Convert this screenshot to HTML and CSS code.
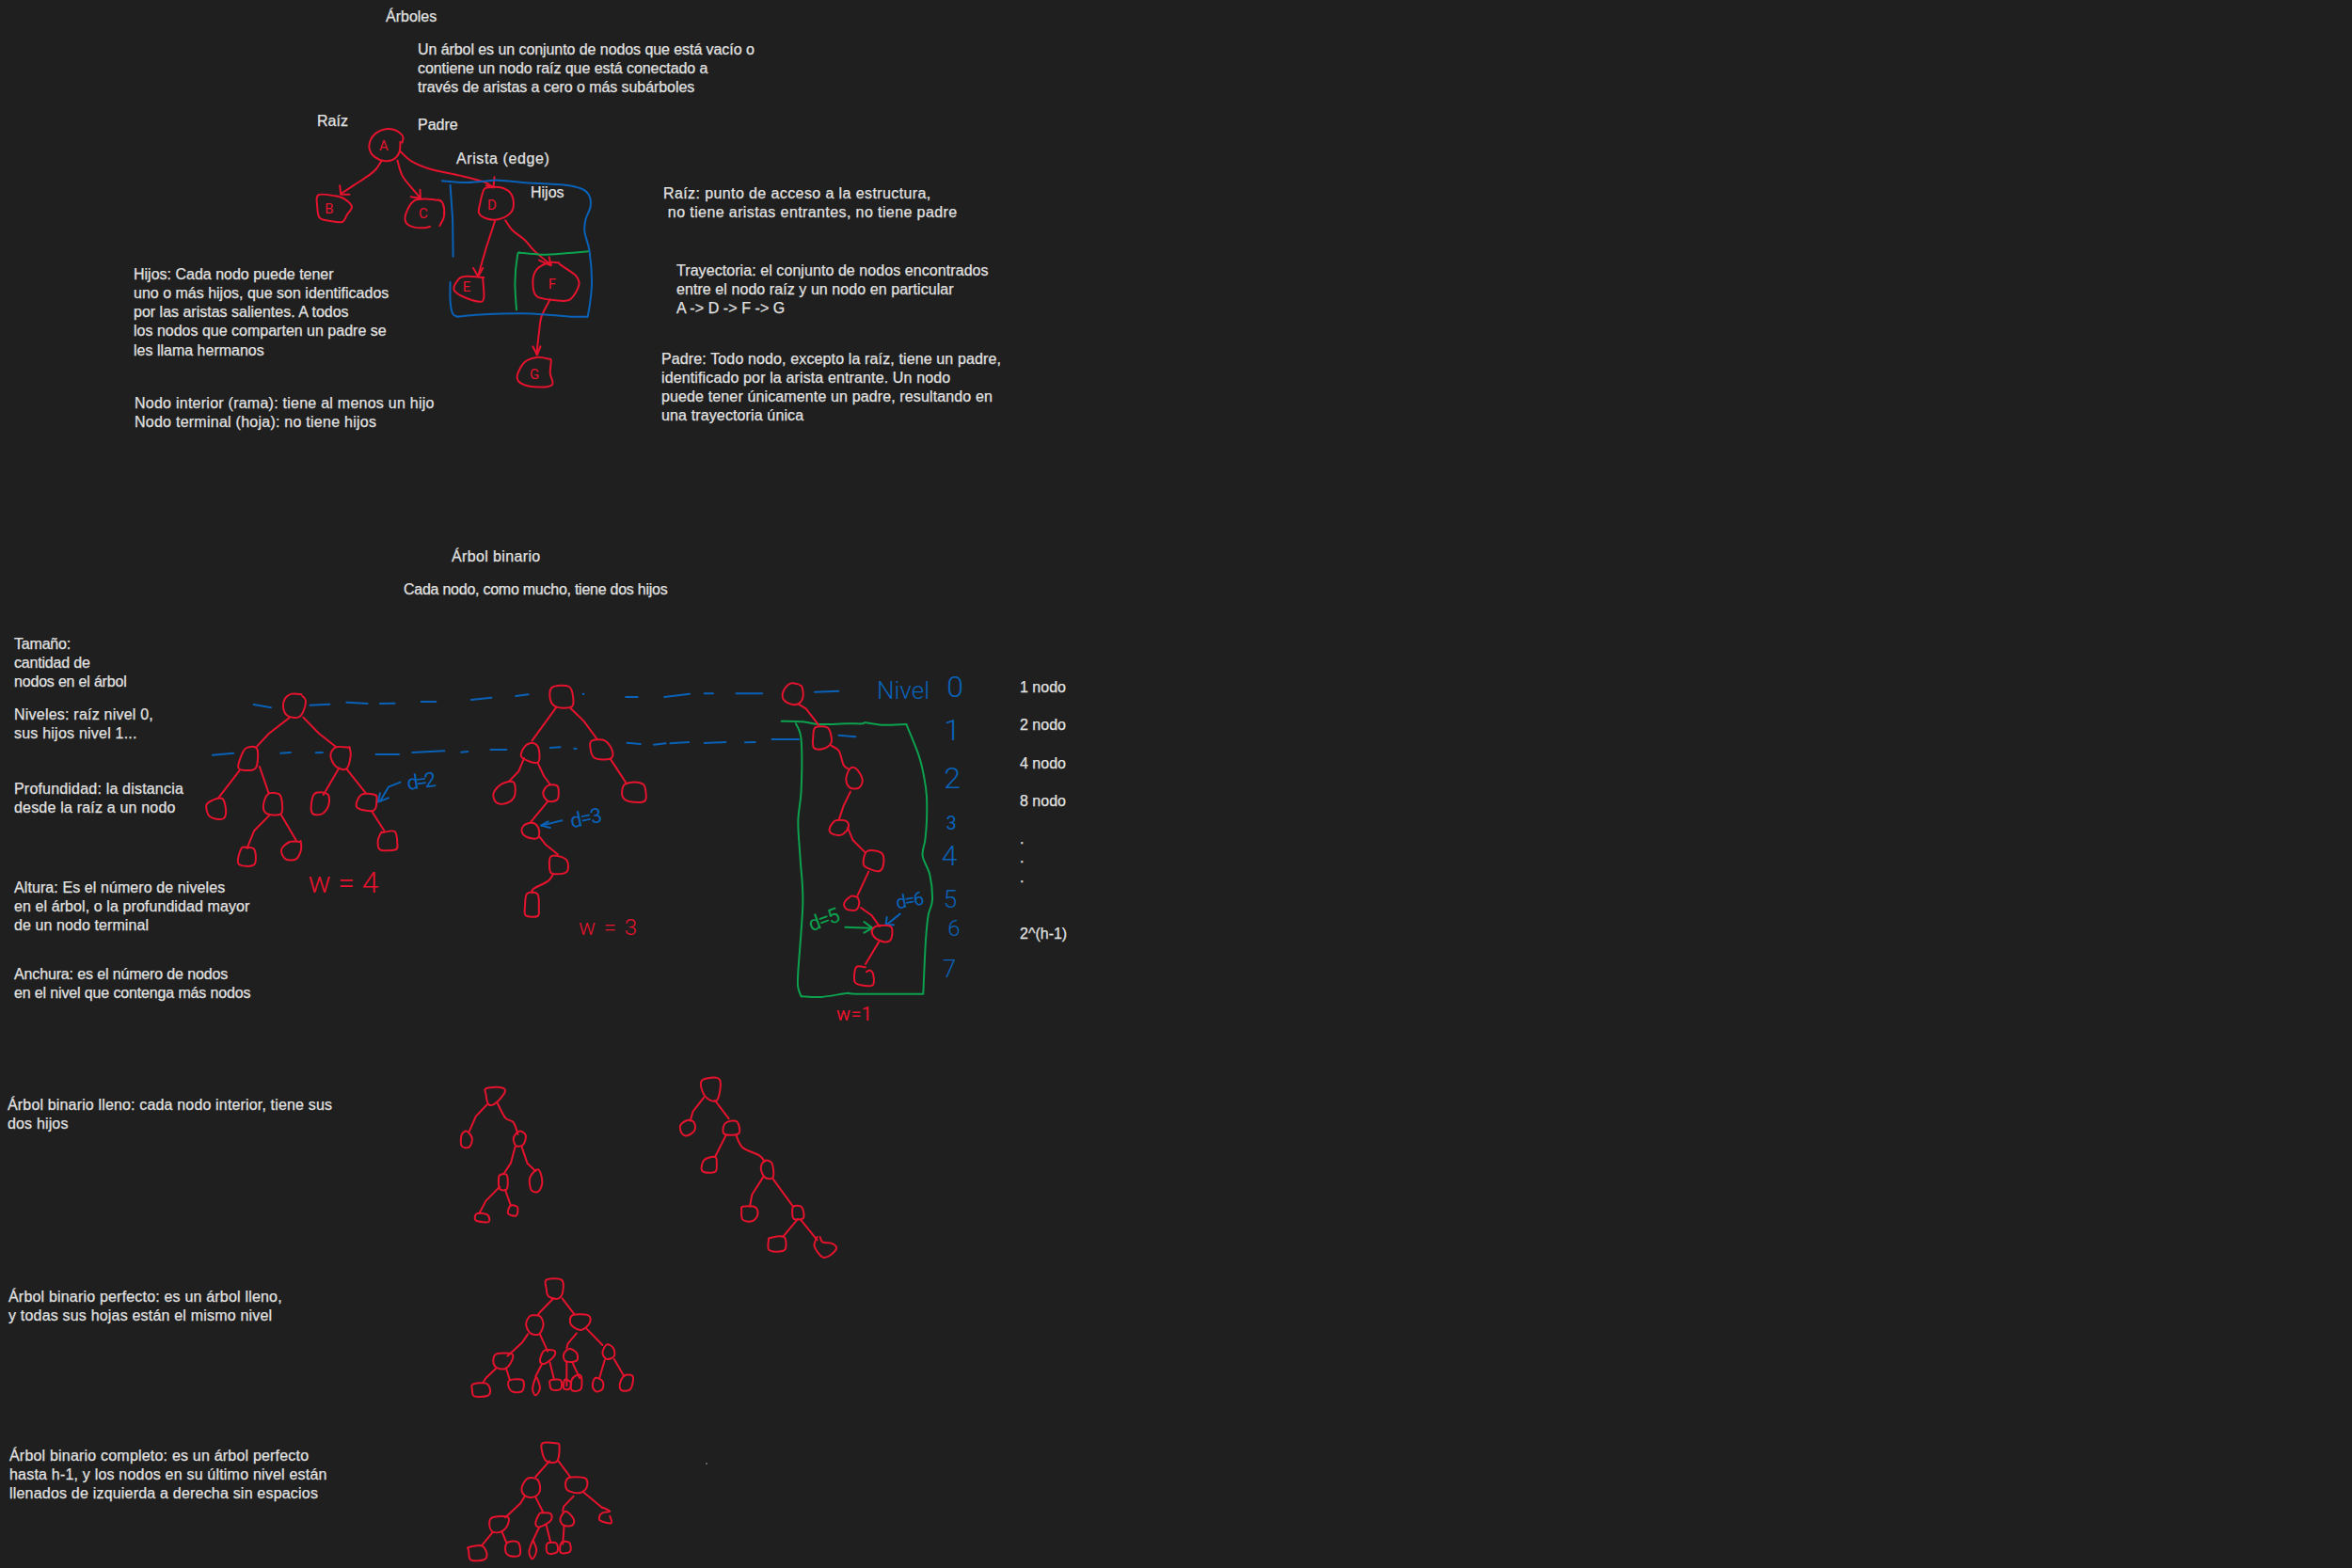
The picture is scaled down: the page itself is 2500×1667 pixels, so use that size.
FILE: index.html
```html
<!DOCTYPE html>
<html lang="es">
<head>
<meta charset="utf-8">
<title>Árboles</title>
<link rel="stylesheet" href="styles.css">
</head>
<body>
<main class="board">
<svg class="ink" width="2500" height="1667" viewBox="0 0 2500 1667">
<!-- section 1: general tree -->
<g transform="translate(300,0) scale(.5102,.3333)">
<g class="red">
<polyline points="250,455 252,440 248,428 235,415 215,412 195,425 183,450 182,478 192,500 212,513 232,508 244,485 246,452"/>
<polyline points="207,513 195,540 180,560 150,590 122,618"/><polyline points="120,592 122,620 140,620"/>
<polygon points="75,622 110,625 130,635 145,660 135,685 125,708 100,705 78,695 73,660"/>
<polyline points="240,512 250,560 270,600 288,632"/><polyline points="287,605 288,632 268,628"/>
<polyline points="330,640 305,635 275,640 258,680 258,710 275,725 295,727 308,723"/><polyline points="328,720 337,690 335,650 325,637"/>
<polyline points="246,483 270,515 310,540 370,560 420,580 440,598"/><polyline points="442,565 440,598 425,592"/>
<polygon points="420,605 412,650 410,680 425,697 450,700 475,680 482,650 475,615 455,598 430,598"/>
<polyline points="443,705 425,790 408,880"/><polyline points="398,855 408,882 418,855"/>
<polyline points="420,885 380,882 365,895 358,925 375,945 410,962 420,950 418,890"/>
<polyline points="465,703 480,735 505,765 525,800 560,845"/><polyline points="535,830 560,847 556,820"/>
<polygon points="575,838 555,838 530,860 522,900 530,945 570,958 600,955 618,910 612,880 580,845"/>
<polyline points="558,955 540,1010 535,1060 530,1130"/><polyline points="522,1105 531,1132 538,1105"/>
<polygon points="555,1145 530,1140 505,1155 490,1195 495,1220 525,1234 562,1228 558,1190 560,1150"/>
</g>
<g class="blue">
<polyline points="333,577 380,582 420,578 450,575 500,582 590,590 625,603 640,625 642,660 632,700 630,740 640,800 645,900 640,980 636,1010"/>
<polyline points="636,1010 600,1010 560,1005 500,1000 420,1003 365,1010"/>
<polyline points="365,1010 355,1000 350,960 350,900"/>
<polyline points="350,590 355,700 356,818"/>
</g>
<g class="green"><polyline points="637,802 590,808 540,812 495,806"/><polyline points="495,806 490,815 485,900 488,988"/></g>
</g>
<!-- section 2, first tree -->
<g transform="translate(0,660) scale(.4464,.3333)">
<g class="blue">
<polyline points="604,267 645,277"/><polyline points="738,269 785,266"/><polyline points="825,260 875,264"/><polyline points="905,264 940,263"/><polyline points="1003,258 1038,258"/>
<polyline points="506,428 556,422"/><polyline points="668,422 692,420"/><polyline points="752,421 768,420"/><polyline points="895,426 950,426"/><polyline points="982,420 1058,415"/><polyline points="1098,419 1114,417"/>
<polyline points="953,515 925,530 905,575"/><polyline points="905,550 900,578 925,565"/>
</g>
<g class="red">
<polyline points="718,235 695,233 678,250 675,280 685,303 710,308 722,290 728,255 720,240"/>
<polyline points="690,308 640,360 612,400"/><polyline points="722,308 760,360 800,402"/>
<polygon points="612,408 590,404 578,420 568,470 600,476 612,460"/>
<polyline points="832,405 800,403 787,430 800,465 825,472 835,430 832,402"/>
<polyline points="570,478 520,565"/><polyline points="618,465 640,550"/>
<polygon points="530,568 505,573 491,590 500,625 530,632 538,610"/>
<polygon points="665,553 638,553 627,590 635,615 668,617 672,585"/>
<polyline points="642,620 605,670 590,720"/><polyline points="670,620 705,700"/>
<polyline points="590,725 575,725 568,775 605,778 606,730 585,722"/>
<polyline points="715,705 690,705 670,730 680,760 705,760 717,730 716,702"/>
<polyline points="807,470 770,555"/><polyline points="825,472 870,548"/>
<polygon points="780,553 748,553 742,610 765,617 782,590"/>
<polygon points="893,555 860,555 850,595 890,605 897,570"/>
<polyline points="885,607 915,670"/>
<polygon points="912,675 940,672 946,710 942,730 905,730 900,700 908,675"/>
</g>
</g>
<!-- section 2, second tree and level lines -->
<g transform="translate(500,700) scale(.4464,.3333)">
<g class="blue">
<polyline points="2,132 50,125"/><polyline points="108,120 138,115"/><polyline points="268,113 270,114"/><polyline points="370,123 398,123"/><polyline points="462,123 522,113"/><polyline points="557,112 578,112"/><polyline points="633,112 695,112"/><polyline points="820,107 877,104"/>
<polyline points="48,291 86,291"/><polyline points="190,285 214,283"/><polyline points="247,287 252,288"/><polyline points="373,269 405,273"/><polyline points="437,275 465,271"/><polyline points="476,271 520,267"/><polyline points="557,270 608,267"/><polyline points="654,268 678,267"/><polyline points="718,258 782,258"/><polyline points="877,245 917,250"/>
<polyline points="218,517 170,533"/><polyline points="185,520 168,533 190,540"/>
</g>
<g class="red">
<polygon points="195,92 235,90 245,130 240,155 205,155 190,130"/>
<polyline points="205,155 147,262"/><polyline points="238,158 270,200 302,258"/>
<polygon points="150,270 130,280 122,315 160,332 163,290"/>
<polygon points="290,262 320,262 338,295 333,320 295,317 285,280"/>
<polyline points="128,318 115,360 92,392"/><polyline points="160,332 175,375 190,402"/>
<polygon points="103,395 75,400 55,430 62,460 85,462 105,440"/>
<polygon points="205,405 185,405 173,430 185,455 207,450 210,420"/>
<polyline points="333,320 355,365 372,400"/>
<polygon points="385,395 365,405 362,440 380,457 415,455 417,420 410,400"/>
<polyline points="185,455 142,525"/>
<polygon points="150,525 130,530 122,550 135,570 160,573 163,545"/>
<polyline points="165,570 180,595 208,625"/>
<polygon points="208,630 190,635 190,680 205,688 230,680 230,645"/>
<polyline points="197,688 185,710 150,735 147,748"/>
<polygon points="135,750 160,752 163,800 160,822 132,820 130,790"/>
</g>
</g>
<!-- section 2, third tree -->
<g transform="translate(820,700) scale(.3333)">
<g class="green">
<polyline points="32,200 100,202 150,210 240,208 290,208 300,205 350,212 430,210"/>
<polyline points="430,210 470,310 487,380 495,440 495,520 490,580 482,630 505,690 513,770 500,820 492,900 484,1068"/>
<polyline points="484,1070 270,1070 240,1068 160,1080 95,1078"/>
<polyline points="95,1078 85,1050 85,1000 100,780 92,640 85,520 95,420 95,260 78,208"/>
<polyline points="235,857 320,860"/><polyline points="295,840 322,860 295,875"/>
</g>
<g class="blue"><polyline points="410,815 367,850"/><polyline points="368,825 365,850 390,850"/></g>
<g class="red">
<polyline points="85,82 60,80 38,105 38,130 60,145 85,145 100,125 98,92 90,85"/>
<polyline points="85,145 110,160 150,212"/>
<polygon points="140,220 178,220 190,245 190,270 165,288 135,285 133,250"/>
<polyline points="190,278 215,295 230,340 245,352"/>
<polygon points="250,352 270,352 290,385 280,412 250,412 238,385"/>
<polyline points="252,425 230,470 215,515"/>
<polygon points="215,515 240,520 245,540 225,562 195,560 185,545 200,520"/>
<polyline points="243,540 260,580 300,620"/>
<polygon points="305,615 350,620 358,650 345,678 310,670 293,655"/>
<polyline points="310,680 275,755"/>
<polyline points="275,762 255,758 232,780 240,800 270,802 280,780 275,762"/>
<polyline points="285,795 320,820 345,855"/>
<polygon points="345,852 380,855 385,880 375,902 345,900 322,880 325,860"/>
<polyline points="342,905 300,975"/>
<polyline points="300,985 270,985 265,1030 285,1042 323,1042 325,1010 315,995 303,1000"/>
</g>
</g>
<!-- full binary trees -->
<g class="red" transform="translate(0,1130) scale(.5869,.3333)">
<polygon points="880,82 905,78 915,90 900,125 885,133 880,100"/>
<polyline points="882,133 862,170 850,218"/><polyline points="900,125 915,175 930,190 938,228"/>
<polygon points="845,218 836,230 836,265 850,268 855,240"/>
<polygon points="940,218 930,240 935,265 948,260 952,230"/>
<polyline points="933,268 925,320 912,355"/><polyline points="945,268 955,320 970,345"/>
<polygon points="905,358 918,358 918,402 905,402 903,375"/>
<polygon points="975,340 960,365 962,405 975,410 982,380"/>
<polyline points="905,395 880,440 868,480"/><polyline points="915,405 925,455"/>
<polygon points="865,480 860,495 865,505 885,507 883,485"/>
<polygon points="925,455 920,480 935,487 937,460"/>
<polygon points="1272,55 1303,52 1300,115 1285,118 1272,90"/>
<polyline points="1275,110 1255,155 1250,185"/><polyline points="1295,120 1320,178"/>
<polygon points="1245,183 1232,200 1235,225 1245,232 1258,215 1257,190"/>
<polygon points="1318,188 1335,188 1338,225 1313,228 1310,205"/>
<polyline points="1315,230 1295,300"/><polyline points="1333,230 1345,270 1375,295 1385,315"/>
<polygon points="1295,300 1275,310 1272,345 1295,348 1298,320"/>
<polygon points="1385,312 1378,335 1385,365 1400,365 1398,320"/>
<polyline points="1382,365 1362,420 1358,458"/><polyline points="1400,370 1435,455"/>
<polygon points="1345,458 1368,460 1372,485 1362,505 1345,500 1343,470"/>
<polygon points="1437,458 1452,460 1455,495 1438,498 1435,480"/>
<polyline points="1445,498 1418,555"/><polyline points="1450,500 1480,565"/>
<polygon points="1395,558 1420,555 1422,595 1405,602 1392,595 1392,565"/>
<polyline points="1480,555 1475,585 1490,620 1505,612 1515,590 1505,575 1490,572 1485,555"/>
</g>
<!-- perfect and complete binary trees -->
<g class="red" transform="translate(0,1340) scale(.4591,.3333)">
<polygon points="1265,62 1300,62 1303,100 1292,122 1270,115 1265,90"/>
<polyline points="1282,120 1250,165 1245,175"/><polyline points="1302,122 1330,172"/>
<polygon points="1235,175 1250,178 1258,205 1248,235 1228,232 1218,205 1225,180"/>
<polygon points="1325,175 1362,175 1365,200 1345,222 1322,205"/>
<polyline points="1222,235 1210,260 1175,305"/><polyline points="1250,235 1268,290"/>
<polyline points="1335,232 1315,265 1312,280"/><polyline points="1358,218 1395,270"/>
<polygon points="1150,298 1185,298 1185,320 1170,345 1150,342 1142,320"/>
<polygon points="1270,285 1285,290 1280,310 1260,330 1250,320 1258,290"/>
<polygon points="1318,282 1335,295 1335,320 1310,322 1305,300"/>
<polygon points="1405,268 1420,280 1422,305 1405,315 1395,295"/>
<polyline points="1148,345 1125,375 1118,390"/><polyline points="1172,345 1180,380"/>
<polygon points="1095,395 1125,392 1135,415 1128,432 1098,433 1093,410"/>
<polygon points="1180,382 1210,382 1210,415 1190,420 1178,405"/>
<polyline points="1255,330 1240,370"/><polyline points="1273,325 1283,380"/>
<polygon points="1240,375 1233,410 1240,430 1250,410 1245,380"/>
<polygon points="1275,382 1298,382 1298,410 1278,412 1273,395"/>
<polyline points="1312,322 1312,400"/><polyline points="1325,325 1342,375"/>
<polygon points="1308,380 1305,408 1318,410 1322,390"/>
<polygon points="1330,370 1345,368 1345,410 1325,415 1322,390"/>
<polyline points="1400,318 1388,375"/><polyline points="1422,315 1445,370"/>
<polygon points="1378,375 1395,385 1395,410 1380,418 1372,400"/>
<polygon points="1445,368 1465,370 1460,410 1440,415 1435,395"/>

<polygon points="1256,583 1286,583 1295,590 1290,640 1265,640 1255,610"/>
<polyline points="1272,640 1240,690"/><polyline points="1293,640 1320,690"/>
<polygon points="1222,695 1245,700 1250,735 1235,755 1215,750 1208,725"/>
<polygon points="1315,695 1355,695 1358,725 1340,742 1312,730"/>
<polyline points="1215,752 1205,775 1170,820"/><polyline points="1240,755 1258,805"/>
<polyline points="1328,752 1305,785 1303,800"/><polyline points="1350,738 1395,790"/>
<polygon points="1140,820 1175,818 1175,845 1160,865 1140,865 1133,840"/>
<polygon points="1255,805 1275,808 1275,830 1250,850 1240,840 1248,810"/>
<polygon points="1310,800 1328,825 1325,845 1305,845 1297,825"/>
<polyline points="1395,788 1412,800 1395,805 1388,815 1390,830 1415,838 1412,815"/>
<polyline points="1140,868 1115,910"/><polyline points="1162,865 1172,898"/>
<polygon points="1085,915 1115,910 1127,935 1120,955 1090,955 1085,925"/>
<polygon points="1175,900 1200,900 1203,940 1180,942 1170,925"/>
<polyline points="1248,852 1235,890"/><polyline points="1265,845 1275,900"/>
<polygon points="1233,895 1225,930 1233,952 1242,925 1235,895"/>
<polygon points="1268,902 1288,902 1290,930 1270,935 1265,920"/>
<polyline points="1306,848 1303,905"/>
<polygon points="1300,900 1318,900 1320,928 1298,932"/>
</g>
<!-- drawn labels -->
<g class="lab lab-red s14">
<text x="408" y="160">A</text><text x="350" y="227">B</text><text x="450" y="232">C</text><text x="523" y="223">D</text><text x="496" y="310">E</text><text x="587" y="307">F</text><text x="568" y="403">G</text>
</g>
<g class="lab lab-red">
<text class="s32" x="365" y="949" textLength="75">w = 4</text>
<text class="s24" x="646" y="994" textLength="62">w = 3</text>
<text class="s20" x="908" y="1085" textLength="38">w=1</text>
</g>
<g class="lab lab-blue">
<text class="s22" x="448" y="838" textLength="31" transform="rotate(-8 448 832)">d=2</text>
<text class="s22" x="623" y="877" textLength="34" transform="rotate(-12 623 870)">d=3</text>
<text class="s20" x="967" y="964" textLength="30" transform="rotate(-10 967 957)">d=6</text>
<text class="s26" x="960" y="743">Nivel</text>
<text class="s32" x="1015" y="741">0</text>
<text class="s32" x="1012" y="787">1</text>
<text class="s32" x="1012" y="838">2</text>
<text class="s20" x="1011" y="882">3</text>
<text class="s30" x="1009" y="920">4</text>
<text class="s26" x="1010" y="965">5</text>
<text class="s24" x="1014" y="995">6</text>
<text class="s26" x="1009" y="1039">7</text>
</g>
<g class="lab lab-green"><text class="s22" x="876" y="985" textLength="34" transform="rotate(-20 876 978)">d=5</text></g>
<circle class="speck" cx="751" cy="1556" r="1"/>
</svg>

<p class="note t1">Árboles</p>
<p class="note t2">Un árbol es un conjunto de nodos que está vacío o
contiene un nodo raíz que está conectado a
través de aristas a cero o más subárboles</p>
<p class="note t3">Raíz</p>
<p class="note t4">Padre</p>
<p class="note t5">Arista (edge)</p>
<p class="note t6">Hijos</p>
<p class="note t7">Raíz: punto de acceso a la estructura,
 no tiene aristas entrantes, no tiene padre</p>
<p class="note t8">Trayectoria: el conjunto de nodos encontrados
entre el nodo raíz y un nodo en particular
A -&gt; D -&gt; F -&gt; G</p>
<p class="note t9">Padre: Todo nodo, excepto la raíz, tiene un padre,
identificado por la arista entrante. Un nodo
puede tener únicamente un padre, resultando en
una trayectoria única</p>
<p class="note t10">Hijos: Cada nodo puede tener
uno o más hijos, que son identificados
por las aristas salientes. A todos
los nodos que comparten un padre se
les llama hermanos</p>
<p class="note t11">Nodo interior (rama): tiene al menos un hijo
Nodo terminal (hoja): no tiene hijos</p>
<p class="note t12">Árbol binario</p>
<p class="note t13">Cada nodo, como mucho, tiene dos hijos</p>
<p class="note t14">Tamaño:
cantidad de
nodos en el árbol</p>
<p class="note t15">Niveles: raíz nivel 0,
sus hijos nivel 1...</p>
<p class="note t16">Profundidad: la distancia
desde la raíz a un nodo</p>
<p class="note t17">Altura: Es el número de niveles
en el árbol, o la profundidad mayor
de un nodo terminal</p>
<p class="note t18">Anchura: es el número de nodos
en el nivel que contenga más nodos</p>
<p class="note t19">1 nodo

2 nodo

4 nodo

8 nodo

.
.
.


2^(h-1)</p>
<p class="note t20">Árbol binario lleno: cada nodo interior, tiene sus
dos hijos</p>
<p class="note t21">Árbol binario perfecto: es un árbol lleno,
y todas sus hojas están el mismo nivel</p>
<p class="note t22">Árbol binario completo: es un árbol perfecto
hasta h-1, y los nodos en su último nivel están
llenados de izquierda a derecha sin espacios</p>
</main>
<script src="ink.js"></script>
</body>
</html>
```
FILE: styles.css
```css
html, body { margin: 0; padding: 0; background: #1f1f1f; }
.board { position: relative; width: 2500px; height: 1667px; overflow: hidden; background: #1f1f1f; }
.ink { position: absolute; left: 0; top: 0; }
.ink polyline, .ink polygon, .ink path {
  fill: none;
  stroke-width: 2px;
  stroke-linecap: round;
  stroke-linejoin: round;
  vector-effect: non-scaling-stroke;
}
.red polyline, .red polygon, .red path { stroke: #e5132d; }
.blue polyline, .blue polygon, .blue path { stroke: #0a62b8; }
.green polyline, .green polygon, .green path { stroke: #0ca14e; }
.lab text { font-family: Roboto, "Liberation Sans", sans-serif; font-weight: 300; text-anchor: middle; }
.lab-red text { fill: #e5132d; }
.lab-blue text { fill: #0a62b8; }
.lab-green text { fill: #0ca14e; }
.s14 text { font-size: 15px; font-weight: 400; }
.lab .s20 { font-size: 20px; font-weight: 400; }
.lab .s22 { font-size: 22px; font-weight: 400; }
.lab .s24 { font-size: 24px; }
.lab .s26 { font-size: 26px; }
.lab .s30 { font-size: 30px; }
.lab .s32 { font-size: 32px; }
.speck { fill: #777; }

.note {
  position: absolute;
  margin: 0;
  white-space: pre;
  font-family: "Liberation Sans", sans-serif;
  font-size: 16px;
  line-height: 20.15px;
  color: #e2e2e2;
  -webkit-text-stroke: .25px #e2e2e2;
}
.t1 { left: 410px; top: 8px; }
.t2 { left: 444px; top: 43px; letter-spacing: -.07px; }
.t3 { left: 337px; top: 119px; }
.t4 { left: 444px; top: 123px; }
.t5 { left: 485px; top: 159px; letter-spacing: .6px; }
.t6 { left: 564px; top: 195px; }
.t7 { left: 705px; top: 196px; letter-spacing: .4px; }
.t8 { left: 719px; top: 278px; letter-spacing: .07px; }
.t9 { left: 703px; top: 372px; letter-spacing: .13px; }
.t10 { left: 142px; top: 282px; }
.t11 { left: 143px; top: 419px; letter-spacing: .25px; }
.t12 { left: 480px; top: 582px; letter-spacing: .37px; }
.t13 { left: 429px; top: 617px; letter-spacing: -.25px; }
.t14 { left: 15px; top: 675px; letter-spacing: -.19px; }
.t15 { left: 15px; top: 750px; letter-spacing: .22px; }
.t16 { left: 15px; top: 829px; letter-spacing: .19px; }
.t17 { left: 15px; top: 934px; letter-spacing: .09px; }
.t18 { left: 15px; top: 1026px; letter-spacing: -.14px; }
.t19 { left: 1084px; top: 721px; }
.t20 { left: 8px; top: 1165px; letter-spacing: .16px; }
.t21 { left: 9px; top: 1369px; letter-spacing: .19px; }
.t22 { left: 10px; top: 1538px; letter-spacing: .2px; }
```
FILE: ink.js
```js
// Turns the pen strokes' sample points into smooth curves, so they read as freehand ink.
var SVG_NS = 'http://www.w3.org/2000/svg';

document.querySelectorAll('.ink polyline, .ink polygon').forEach(function (el) {
  var pts = el.getAttribute('points').trim().split(/\s+/).map(function (p) {
    return p.split(',').map(Number);
  });
  var closed = el.tagName === 'polygon';
  if (!closed && pts.length < 4) return; // arrowheads and straight strokes keep their corners

  var n = pts.length;
  var at = function (i) {
    return closed ? pts[(i + n) % n] : pts[Math.max(0, Math.min(n - 1, i))];
  };
  var d = 'M' + pts[0].join(' ');
  var last = closed ? n : n - 1;
  for (var i = 0; i < last; i++) {
    var p0 = at(i - 1), p1 = at(i), p2 = at(i + 1), p3 = at(i + 2);
    d += ' C' + (p1[0] + (p2[0] - p0[0]) / 6).toFixed(1) + ' ' + (p1[1] + (p2[1] - p0[1]) / 6).toFixed(1) +
         ' ' + (p2[0] - (p3[0] - p1[0]) / 6).toFixed(1) + ' ' + (p2[1] - (p3[1] - p1[1]) / 6).toFixed(1) +
         ' ' + p2[0] + ' ' + p2[1];
  }
  var path = document.createElementNS(SVG_NS, 'path');
  path.setAttribute('d', d);
  el.replaceWith(path);
});
```
